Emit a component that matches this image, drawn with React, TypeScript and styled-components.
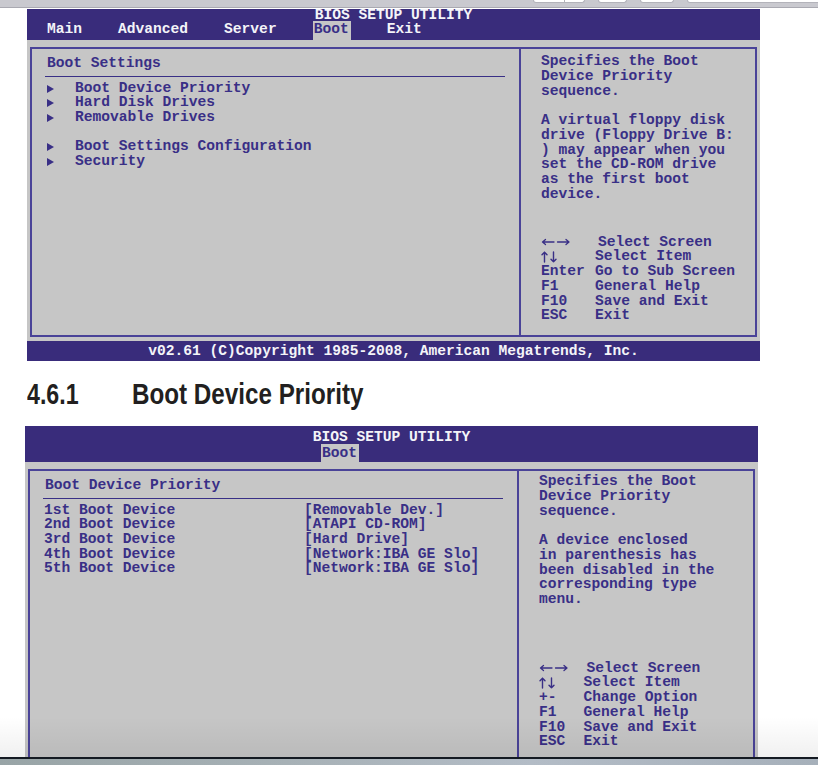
import React from "react";
import styled, { createGlobalStyle } from "styled-components";

const INK = "#392f86";
const BAR = "#392c7b";
const RULE = "#4a4398";
const GREY = "#c6c6c6";
const MONO = `"Liberation Mono", "Courier New", monospace`;

const Global = createGlobalStyle`
  html, body {
    margin: 0;
    padding: 0;
    background: #ffffff;
    overflow: hidden;
  }
  body {
    font-family: ${MONO};
  }
`;

const Page = styled.div`
  position: relative;
  width: 818px;
  height: 765px;
  overflow: hidden;
  background: #ffffff;
`;

/* window chrome along the top edge */
const Chrome = styled.div`
  height: 7px;
  background: #c9c9cf;
  border-bottom: 1px solid #a9a9b1;
  display: flex;
  align-items: flex-start;
  gap: 13px;
  padding-left: 533px;
  margin-bottom: 1px;
`;

const ChromeButton = styled.div<{ $w: number }>`
  position: relative;
  flex: none;
  width: ${(p) => p.$w}px;
  height: 2px;
  background: #ffffff;
  border: 1px solid #b3b3ba;
  border-top: none;
  border-radius: 0 0 3px 3px;
`;

const ChromeSplit = styled.span`
  position: absolute;
  left: 30px;
  top: 0;
  bottom: 0;
  width: 1px;
  background: #b3b3ba;
`;

/* BIOS screen */
const Screen = styled.section<{ $x: number }>`
  width: 733px;
  margin-left: ${(p) => p.$x}px;
  background: ${GREY};
  font-family: ${MONO};
  font-weight: 700;
  font-size: 14.6px;
  color: ${INK};
`;

const Header = styled.header<{ $h: number }>`
  background: ${BAR};
  color: #f4f4f8;
  height: ${(p) => p.$h}px;
  display: flex;
  flex-direction: column;
`;

const Title = styled.div<{ $lh: number; $top: number }>`
  flex: none;
  text-align: center;
  line-height: ${(p) => p.$lh}px;
  padding-top: ${(p) => p.$top}px;
  white-space: pre;
`;

const Tabs = styled.nav<{ $inset: number; $h: number; $lh: number }>`
  flex: none;
  margin-top: auto;
  height: ${(p) => p.$h}px;
  line-height: ${(p) => p.$lh}px;
  display: flex;
  gap: 36px;
  padding-left: ${(p) => p.$inset}px;
`;

const Tab = styled.span<{ $active?: boolean }>`
  white-space: pre;
  padding: ${(p) => (p.$active ? "0 2px 0 1px" : "0")};
  background: ${(p) => (p.$active ? GREY : "transparent")};
  color: ${(p) => (p.$active ? INK : "#f4f4f8")};
`;

const Body = styled.div<{ $h: number }>`
  box-sizing: border-box;
  height: ${(p) => p.$h}px;
  padding: 7px 3px 4px 3px;
  display: flex;
`;

const Frame = styled.div`
  flex: 1;
  border: 2px solid ${RULE};
  display: grid;
  grid-template-columns: 487px 1fr;
`;

const Main = styled.div`
  padding: 0 14px 0 13px;
  line-height: 14.7px;
`;

const SectionTitle = styled.div`
  padding: 6.5px 0 5.5px 2px;
  border-bottom: 1px solid ${INK};
  margin-bottom: 4px;
  white-space: pre;
`;

const MenuItem = styled.div`
  display: flex;
  align-items: center;
  padding-left: 2px;
  height: 14.7px;
  white-space: pre;
`;

const Marker = styled.span`
  flex: none;
  width: 0;
  height: 0;
  border-left: 7px solid ${INK};
  border-top: 4.5px solid transparent;
  border-bottom: 4.5px solid transparent;
  margin: 1px 21px 0 0;
`;

const Blank = styled.div`
  height: 14.7px;
`;

const Row = styled.div`
  display: grid;
  grid-template-columns: 260px auto;
  padding-left: 1px;
  height: 14.7px;
  white-space: pre;
`;

const Side = styled.aside<{ $top: number }>`
  border-left: 2px solid ${RULE};
  padding: ${(p) => p.$top}px 0 12px 20px;
  display: flex;
  flex-direction: column;
  line-height: 14.7px;
`;

const Help = styled.p`
  margin: 0;
  white-space: pre;
`;

const Keys = styled.div<{ $kw: number }>`
  margin-top: auto;
  display: grid;
  grid-template-columns: ${(p) => p.$kw}px auto;
  white-space: pre;
`;

const KeyCap = styled.span`
  display: flex;
  align-items: center;
`;

const KeyDesc = styled.span<{ $nudge?: boolean }>`
  padding-left: ${(p) => (p.$nudge ? 3 : 0)}px;
`;

const Footer = styled.footer`
  background: ${BAR};
  color: #f4f4f8;
  height: 20px;
  line-height: 20px;
  text-align: center;
  white-space: pre;
`;

/* manual section heading between the two screens */
const Heading = styled.h2`
  margin: 16px 0 15px 27px;
  display: flex;
  font-family: "Liberation Sans", Arial, Helvetica, sans-serif;
  font-weight: 700;
  font-size: 29px;
  line-height: 34px;
  color: #221f20;
`;

const HeadNum = styled.span`
  flex: none;
  width: 105px;
  white-space: nowrap;
  transform: scaleX(0.8);
  transform-origin: left center;
`;

const HeadText = styled.span`
  white-space: nowrap;
  transform: scaleX(0.835);
  transform-origin: left center;
`;

/* bottom fade and desktop strip */
const Fade = styled.div`
  position: absolute;
  left: 0;
  right: 0;
  bottom: 8px;
  height: 40px;
  pointer-events: none;
  background: linear-gradient(rgba(0, 0, 0, 0), rgba(0, 0, 0, 0.06));
`;

const Dock = styled.div`
  position: absolute;
  left: 0;
  right: 0;
  bottom: 0;
  height: 6px;
  border-top: 2px solid #141a22;
  background: linear-gradient(90deg, #98a4a6, #a7b1b6 35%, #b3bcc6 65%, #a6b0ba);
`;

/* key glyphs: thin line arrows as in the BIOS font */
const LeftRight = () => (
  <svg width="30" height="10" viewBox="0 0 30 10" aria-label="left right">
    <g fill="none" stroke={INK} strokeWidth="1.3" strokeLinecap="round" strokeLinejoin="round">
      <path d="M1.5 5H13M4.5 2.5L1.5 5L4.5 7.5" />
      <path d="M16.5 5H28M25 2.5L28 5L25 7.5" />
    </g>
  </svg>
);

const UpDown = () => (
  <svg width="17" height="12" viewBox="0 0 17 12" aria-label="up down">
    <g fill="none" stroke={INK} strokeWidth="1.4" strokeLinecap="round" strokeLinejoin="round">
      <path d="M3.5 1.2V11M1 3.8L3.5 1.2L6 3.8" />
      <path d="M12.5 1V10.8M10 8.2L12.5 10.8L15 8.2" />
    </g>
  </svg>
);

type KeyRow = { key: React.ReactNode; desc: string; nudge?: boolean };

const mainTabs = ["Main", "Advanced", "Server", "Boot", "Exit"];

const bootMenu: (string | null)[] = [
  "Boot Device Priority",
  "Hard Disk Drives",
  "Removable Drives",
  null,
  "Boot Settings Configuration",
  "Security",
];

const devices = [
  ["1st Boot Device", "[Removable Dev.]"],
  ["2nd Boot Device", "[ATAPI CD-ROM]"],
  ["3rd Boot Device", "[Hard Drive]"],
  ["4th Boot Device", "[Network:IBA GE Slo]"],
  ["5th Boot Device", "[Network:IBA GE Slo]"],
];

const keysMain: KeyRow[] = [
  { key: <LeftRight />, desc: "Select Screen", nudge: true },
  { key: <UpDown />, desc: "Select Item" },
  { key: "Enter", desc: "Go to Sub Screen" },
  { key: "F1", desc: "General Help" },
  { key: "F10", desc: "Save and Exit" },
  { key: "ESC", desc: "Exit" },
];

const keysSub: KeyRow[] = [
  { key: <LeftRight />, desc: "Select Screen", nudge: true },
  { key: <UpDown />, desc: "Select Item" },
  { key: "+-", desc: "Change Option" },
  { key: "F1", desc: "General Help" },
  { key: "F10", desc: "Save and Exit" },
  { key: "ESC", desc: "Exit" },
];

const KeyList: React.FC<{ rows: KeyRow[]; kw: number }> = ({ rows, kw }) => (
  <Keys $kw={kw}>
    {rows.map((r, i) => (
      <React.Fragment key={i}>
        <KeyCap>{r.key}</KeyCap>
        <KeyDesc $nudge={r.nudge}>{r.desc}</KeyDesc>
      </React.Fragment>
    ))}
  </Keys>
);

export default function App() {
  return (
    <Page>
      <Global />
      <Chrome>
        <ChromeButton $w={50}>
          <ChromeSplit />
        </ChromeButton>
        <ChromeButton $w={27} />
        <ChromeButton $w={32} />
        <ChromeButton $w={140} />
      </Chrome>

      <Screen $x={27}>
        <Header $h={31}>
          <Title $lh={11} $top={1}>BIOS SETUP UTILITY</Title>
          <Tabs $inset={20} $h={19} $lh={17}>
            {mainTabs.map((t) => (
              <Tab key={t} $active={t === "Boot"}>
                {t}
              </Tab>
            ))}
          </Tabs>
        </Header>
        <Body $h={301}>
          <Frame>
            <Main>
              <SectionTitle>Boot Settings</SectionTitle>
              {bootMenu.map((m, i) =>
                m === null ? (
                  <Blank key={i} />
                ) : (
                  <MenuItem key={i}>
                    <Marker />
                    {m}
                  </MenuItem>
                )
              )}
            </Main>
            <Side $top={5.3}>
              <Help>
                {"Specifies the Boot\nDevice Priority\nsequence.\n\nA virtual floppy disk\ndrive (Floppy Drive B:\n) may appear when you\nset the CD-ROM drive\nas the first boot\ndevice."}
              </Help>
              <KeyList rows={keysMain} kw={54} />
            </Side>
          </Frame>
        </Body>
        <Footer>v02.61 (C)Copyright 1985-2008, American Megatrends, Inc.</Footer>
      </Screen>

      <Heading>
        <HeadNum>4.6.1</HeadNum>
        <HeadText>Boot Device Priority</HeadText>
      </Heading>

      <Screen $x={25}>
        <Header $h={36}>
          <Title $lh={12} $top={5}>BIOS SETUP UTILITY</Title>
          <Tabs $inset={296} $h={18} $lh={18}>
            <Tab $active>Boot</Tab>
          </Tabs>
        </Header>
        <Body $h={305}>
          <Frame>
            <Main>
              <SectionTitle>Boot Device Priority</SectionTitle>
              {devices.map(([name, value]) => (
                <Row key={name}>
                  <span>{name}</span>
                  <span>{value}</span>
                </Row>
              ))}
            </Main>
            <Side $top={3.3}>
              <Help>
                {"Specifies the Boot\nDevice Priority\nsequence.\n\nA device enclosed\nin parenthesis has\nbeen disabled in the\ncorresponding type\nmenu."}
              </Help>
              <KeyList rows={keysSub} kw={44.5} />
            </Side>
          </Frame>
        </Body>
      </Screen>

      <Fade />
      <Dock />
    </Page>
  );
}
